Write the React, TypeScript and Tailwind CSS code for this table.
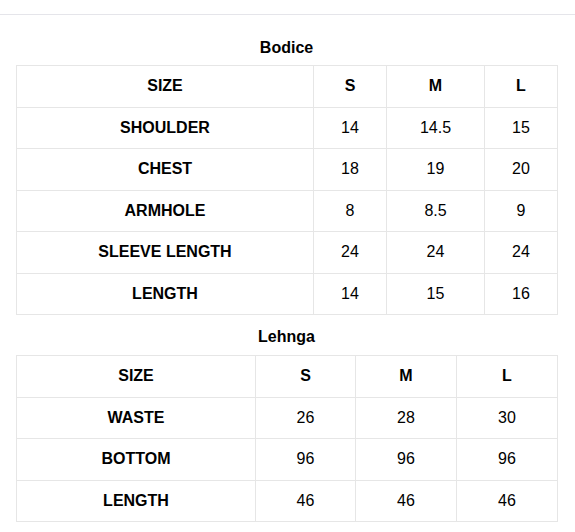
const bodice = {
  title: "Bodice",
  widths: ["w-[297px]", "w-[73px]", "w-[98px]", "w-[73px]"],
  rows: [
    ["SHOULDER", "14", "14.5", "15"],
    ["CHEST", "18", "19", "20"],
    ["ARMHOLE", "8", "8.5", "9"],
    ["SLEEVE LENGTH", "24", "24", "24"],
    ["LENGTH", "14", "15", "16"],
  ],
};

const lehnga = {
  title: "Lehnga",
  widths: ["w-[239px]", "w-[100px]", "w-[101px]", "w-[101px]"],
  rows: [
    ["WASTE", "26", "28", "30"],
    ["BOTTOM", "96", "96", "96"],
    ["LENGTH", "46", "46", "46"],
  ],
};

type Chart = typeof bodice;

function SizeTable({ chart }: { chart: Chart }) {
  return (
    <table className="w-[541px] table-fixed border-collapse text-[16px] text-black">
      <colgroup>
        {chart.widths.map((w, i) => (
          <col key={i} className={w} />
        ))}
      </colgroup>
      <tbody>
        <tr className="h-[41.5px]">
          {["SIZE", "S", "M", "L"].map((h) => (
            <td key={h} className="border border-[#e6e6e6] p-0 text-center font-bold">
              {h}
            </td>
          ))}
        </tr>
        {chart.rows.map((row) => (
          <tr key={row[0]} className="h-[41.5px]">
            {row.map((cell, i) => (
              <td
                key={i}
                className={`border border-[#e6e6e6] p-0 text-center ${i === 0 ? "font-bold" : ""}`}
              >
                {cell}
              </td>
            ))}
          </tr>
        ))}
      </tbody>
    </table>
  );
}

export default function App() {
  return (
    <div className="min-h-screen bg-white pt-[14px] font-['Liberation_Sans',Arial,sans-serif]">
      <div className="border-t border-[#e5e5ea]" />
      <div className="pl-4">
        <h3 className="mt-[24px] mb-[8px] w-[541px] text-center text-[16px] leading-[18px] font-bold text-black">
          {bodice.title}
        </h3>
        <SizeTable chart={bodice} />
        <h3 className="mt-[13px] mb-[9px] w-[541px] text-center text-[16px] leading-[18px] font-bold text-black">
          {lehnga.title}
        </h3>
        <SizeTable chart={lehnga} />
      </div>
    </div>
  );
}
